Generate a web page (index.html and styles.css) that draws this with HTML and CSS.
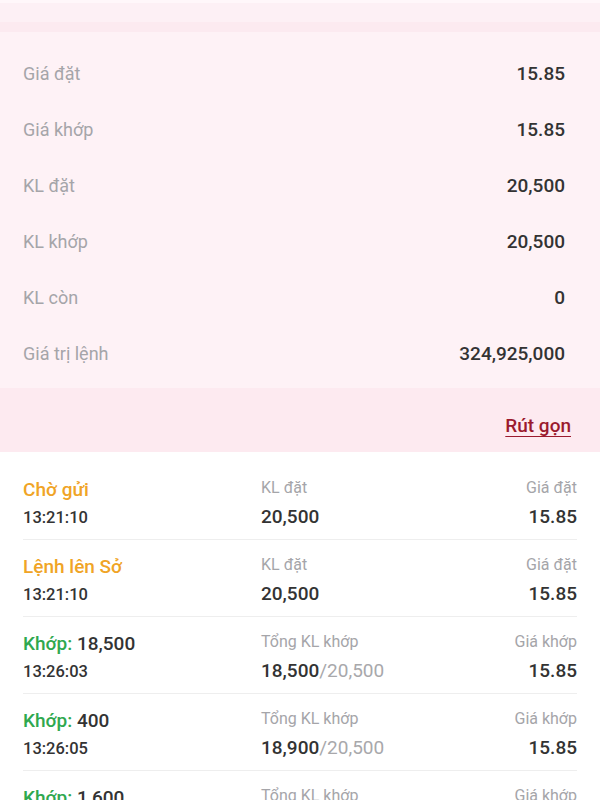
FILE: index.html
```html
<!DOCTYPE html>
<html lang="vi">
<head>
  <meta charset="UTF-8">
  <meta name="viewport" content="width=device-width, initial-scale=1.0">
  <title>Chi tiết lệnh</title>
  <link rel="stylesheet" href="styles.css">
</head>
<body>

<!-- Thông tin lệnh -->
<div class="top-strip"></div>
<div class="top-band"></div>
<div class="detail">
  <div class="detail-row"><span class="label">Giá đặt</span><span class="value">15.85</span></div>
  <div class="detail-row"><span class="label">Giá khớp</span><span class="value">15.85</span></div>
  <div class="detail-row"><span class="label">KL đặt</span><span class="value">20,500</span></div>
  <div class="detail-row"><span class="label">KL khớp</span><span class="value">20,500</span></div>
  <div class="detail-row"><span class="label">KL còn</span><span class="value">0</span></div>
  <div class="detail-row"><span class="label">Giá trị lệnh</span><span class="value">324,925,000</span></div>
</div>
<div class="detail-footer">
  <a class="collapse" href="#">Rút gọn</a>
</div>

<!-- Lịch sử lệnh -->
<div class="history">
  <div class="item">
    <div class="col">
      <div class="status pending">Chờ gửi</div>
      <div class="time">13:21:10</div>
    </div>
    <div class="col">
      <div class="sub">KL đặt</div>
      <div class="num">20,500</div>
    </div>
    <div class="col right">
      <div class="sub">Giá đặt</div>
      <div class="num">15.85</div>
    </div>
  </div>
  <div class="item">
    <div class="col">
      <div class="status pending">Lệnh lên Sở</div>
      <div class="time">13:21:10</div>
    </div>
    <div class="col">
      <div class="sub">KL đặt</div>
      <div class="num">20,500</div>
    </div>
    <div class="col right">
      <div class="sub">Giá đặt</div>
      <div class="num">15.85</div>
    </div>
  </div>
  <div class="item">
    <div class="col">
      <div class="status"><span class="matched">Khớp:</span> 18,500</div>
      <div class="time">13:26:03</div>
    </div>
    <div class="col">
      <div class="sub">Tổng KL khớp</div>
      <div class="num">18,500<span class="total">/20,500</span></div>
    </div>
    <div class="col right">
      <div class="sub">Giá khớp</div>
      <div class="num">15.85</div>
    </div>
  </div>
  <div class="item">
    <div class="col">
      <div class="status"><span class="matched">Khớp:</span> 400</div>
      <div class="time">13:26:05</div>
    </div>
    <div class="col">
      <div class="sub">Tổng KL khớp</div>
      <div class="num">18,900<span class="total">/20,500</span></div>
    </div>
    <div class="col right">
      <div class="sub">Giá khớp</div>
      <div class="num">15.85</div>
    </div>
  </div>
  <div class="item">
    <div class="col">
      <div class="status"><span class="matched">Khớp:</span> 1,600</div>
      <div class="time">13:26:08</div>
    </div>
    <div class="col">
      <div class="sub">Tổng KL khớp</div>
      <div class="num">20,500<span class="total">/20,500</span></div>
    </div>
    <div class="col right">
      <div class="sub">Giá khớp</div>
      <div class="num">15.85</div>
    </div>
  </div>
</div>

</body>
</html>
```

FILE: styles.css
```css
body {
  margin: 0;
  background: #fff;
  color: #333;
  font-family: Roboto, "Noto Sans", sans-serif;
  overflow: hidden;
}
.top-strip {
  height: 22px;
  background: #fdf0f5;
  border-top: 3px solid #fff7fa;
  box-sizing: border-box;
}
.top-band {
  height: 10px;
  background: #fceaf0;
}
.detail {
  background: #fef2f6;
  padding: 13px 35px 7px 23px;
}
.detail-row {
  display: flex;
  justify-content: space-between;
  align-items: center;
  height: 56px;
}
.label {
  font-size: 18px;
  color: #a5a5a9;
}
.value {
  font-size: 19px;
  font-weight: 500;
  color: #333;
}
.detail-footer {
  background: #fdeaf0;
  height: 64px;
  display: flex;
  justify-content: flex-end;
  align-items: center;
  padding: 0 29px;
}
.collapse {
  font-size: 19px;
  font-weight: 500;
  color: #9b1a2e;
  text-decoration: underline;
  text-underline-offset: 4px;
  margin-top: 10px;
}
.history {
  padding: 11px 23px 0;
}
.item {
  display: grid;
  grid-template-columns: 238px 1fr auto;
  padding: 15px 0 9px;
  border-bottom: 1px solid #eeeeee;
}
.col {
  display: flex;
  flex-direction: column;
  gap: 4px;
}
.col.right {
  align-items: flex-end;
}
.status {
  font-size: 19px;
  font-weight: 500;
  line-height: 24px;
  color: #333;
}
.status.pending {
  color: #f0a426;
}
.matched {
  color: #2fa84f;
}
.time {
  font-size: 16.5px;
  font-weight: 500;
  line-height: 24px;
  color: #333;
}
.sub {
  font-size: 16px;
  line-height: 22px;
  color: #a5a5a9;
  margin-top: -1px;
}
.num {
  font-size: 19px;
  font-weight: 500;
  line-height: 24px;
  color: #333;
  margin-top: 2px;
}
.total {
  color: #a8a8ab;
  font-weight: 400;
}
```
